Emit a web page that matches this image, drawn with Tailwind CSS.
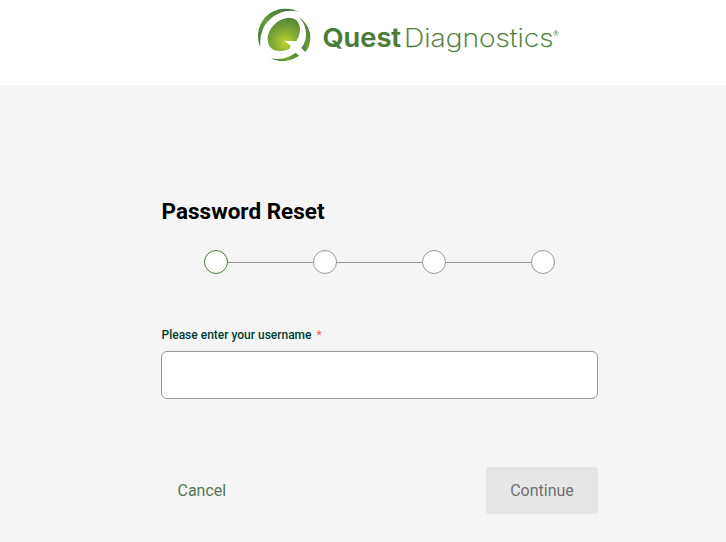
<!DOCTYPE html>
<html lang="en">
<head>
<meta charset="utf-8">
<title>Password Reset</title>
<script src="https://cdn.jsdelivr.net/npm/@tailwindcss/browser@4"></script>
</head>
<body class="flex h-[542px] flex-col overflow-hidden bg-[#f5f5f5] font-['Roboto',sans-serif]">
<header class="h-[85px] shrink-0 bg-white pl-[250px]">
<svg class="block" width="320" height="70" viewBox="0 0 320 70" role="img" aria-label="Quest Diagnostics">
<defs>
<radialGradient id="leaf" gradientUnits="userSpaceOnUse" cx="106" cy="128" r="84"><stop offset="0" stop-color="#bfd02f"/><stop offset=".45" stop-color="#82aa35"/><stop offset="1" stop-color="#437d37"/></radialGradient>
<linearGradient id="rim" x1="0" y1="1" x2=".8" y2="0"><stop offset="0" stop-color="#397339"/><stop offset=".5" stop-color="#669b36"/><stop offset="1" stop-color="#397339"/></linearGradient>
<linearGradient id="base"><stop offset="0" stop-color="#397339"/><stop offset=".6" stop-color="#7aa535"/><stop offset="1" stop-color="#4b8437"/></linearGradient>
</defs>
<g transform="scale(.333333)">
<path fill="url(#rim)" d="M31 141C10 95 38 29 103 26Q128 25 146 36C102 23 58 48 39 86Q28 112 31 141Z"/>
<path fill="url(#rim)" d="M147 51C176 72 188 104 177 137Q173 149 166 156L154 144C174 119 174 79 147 51Z"/>
<path fill="url(#base)" d="M63 175Q99 184 137 158L147 167C123 185 88 189 63 175Z"/>
<path fill="url(#leaf)" d="M139 124 103 122 122 137 118 147C108 151 96 154 84 153C64 151 52 136 53 115C55 84 84 55 117 53C139 53 151 69 150 91C149 103 145 114 139 124Z"/>
</g>
<g fill="#497b37">
<text x="72.5" y="46.7" textLength="78.5" lengthAdjust="spacingAndGlyphs" class="font-['Inter'] text-[26px] font-semibold" stroke="#497b37" stroke-width=".2">Quest</text>
<text x="154" y="46.7" textLength="149.5" lengthAdjust="spacingAndGlyphs" class="font-['Inter'] text-[25.5px] font-extralight" stroke="#497b37" stroke-width=".25">Diagnostics</text>
<text x="303" y="35.5" class="font-['Lato'] text-[7px]">®</text>
</g>
</svg>
</header>
<main class="ml-[161px] w-[437px] pt-[112px]">
<h1 class="h-7 pl-[.6px] text-[22.5px] leading-7 font-bold whitespace-nowrap text-black">Password Reset</h1>
<div class="mt-[25px] ml-[43px] flex w-[351px] items-center">
<span class="size-6 shrink-0 rounded-full border border-[#497b37] bg-white"></span>
<span class="mt-px h-px flex-1 bg-[#939393]"></span>
<span class="size-6 shrink-0 rounded-full border border-[#999] bg-white"></span>
<span class="mt-px h-px flex-1 bg-[#939393]"></span>
<span class="size-6 shrink-0 rounded-full border border-[#999] bg-white"></span>
<span class="mt-px h-px flex-1 bg-[#939393]"></span>
<span class="size-6 shrink-0 rounded-full border border-[#999] bg-white"></span>
</div>
<label for="username" class="mt-[53px] block h-4 pl-[.5px] text-xs leading-4 font-medium text-[#003c30]">Please enter your username <span class="ml-0.5 font-normal text-[#ee5a55]">*</span></label>
<input id="username" type="text" class="mt-2 block h-12 w-full rounded-md border border-[#999] bg-white px-4">
<div class="mt-[68px] flex h-[47px] items-center justify-between">
<button type="button" class="pl-[16.5px] text-base text-[#567552]">Cancel</button>
<button type="button" class="h-[47px] w-28 rounded-[3px] bg-[#e6e6e6] text-base text-[#707070]">Continue</button>
</div>
</main>
</body>
</html>
